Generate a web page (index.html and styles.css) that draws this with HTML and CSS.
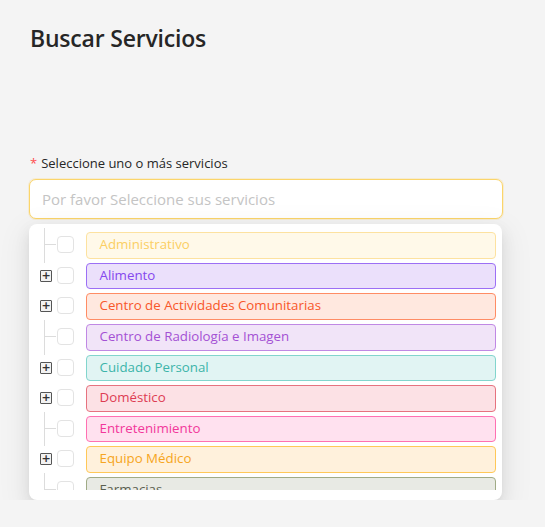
FILE: index.html
```html
<!DOCTYPE html>
<html lang="es">
<head>
<meta charset="utf-8">
<title>Buscar Servicios</title>
<link rel="stylesheet" href="styles.css">
</head>
<body>
<main class="page">
  <h1 class="title">Buscar Servicios</h1>
  <div class="field">
    <label class="label"><span class="req">*</span>Seleccione uno o más servicios</label>
    <div class="input">Por favor Seleccione sus servicios</div>
    <div class="dropdown">
      <ul class="tree">
        <li class="node"><span class="sw leaf"></span><span class="cb"></span><span class="tag t-admin">Administrativo</span></li>
        <li class="node"><span class="sw plus"></span><span class="cb"></span><span class="tag t-alim">Alimento</span></li>
        <li class="node"><span class="sw plus"></span><span class="cb"></span><span class="tag t-cac">Centro de Actividades Comunitarias</span></li>
        <li class="node"><span class="sw leaf"></span><span class="cb"></span><span class="tag t-rad">Centro de Radiología e Imagen</span></li>
        <li class="node"><span class="sw plus"></span><span class="cb"></span><span class="tag t-cui">Cuidado Personal</span></li>
        <li class="node"><span class="sw plus"></span><span class="cb"></span><span class="tag t-dom">Doméstico</span></li>
        <li class="node"><span class="sw leaf"></span><span class="cb"></span><span class="tag t-ent">Entretenimiento</span></li>
        <li class="node"><span class="sw plus"></span><span class="cb"></span><span class="tag t-equ">Equipo Médico</span></li>
        <li class="node"><span class="sw leaf"></span><span class="cb"></span><span class="tag t-far">Farmacias</span></li>
      </ul>
    </div>
  </div>
</main>
</body>
</html>
```

FILE: styles.css
```css
html, body {
  margin: 0;
  padding: 0;
  background: #f4f4f4;
  font-family: "Open Sans", "Noto Sans", sans-serif;
  color: #262626;
}
.page {
  padding: 22px 42px 0 29px;
}
.title {
  margin: 0 0 0 1px;
  font-size: 23px;
  font-weight: 600;
  line-height: 32px;
  color: #262626;
  letter-spacing: -0.2px;
}
.field {
  margin-top: 100px;
  width: 474px;
}
.label {
  display: block;
  font-size: 13px;
  line-height: 18px;
  color: #262626;
  padding-left: 1px;
  margin-bottom: 7px;
  margin-top: 1px;
}
.req {
  color: #ff4d4f;
  margin-right: 4px;
}
.input {
  box-sizing: border-box;
  height: 40px;
  border: 1px solid #fbd56a;
  border-radius: 7px;
  background: #fff;
  padding: 0 12px;
  font-size: 15px;
  line-height: 38px;
  color: #c4c4c4;
  box-shadow: 0 0 0 1px rgba(251, 213, 106, 0.25);
}
.dropdown {
  margin-top: 5px;
  width: 473px;
  box-sizing: border-box;
  background: #fff;
  border-radius: 8px;
  padding: 4px 6px 10px 10px;
  box-shadow: 0 6px 16px rgba(0,0,0,0.08), 0 3px 6px -4px rgba(0,0,0,0.12), 0 9px 28px 8px rgba(0,0,0,0.05);
}
.tree {
  list-style: none;
  margin: 0;
  padding: 0;
  height: 262px;
  overflow: hidden;
}
.node {
  display: flex;
  align-items: flex-start;
  height: 30.625px;
  padding-top: 4px;
  box-sizing: border-box;
}
.sw {
  position: relative;
  width: 18px;
  height: 26.625px;
  flex: none;
}
.sw.leaf::before {
  content: "";
  position: absolute;
  left: 5px;
  top: -4px;
  bottom: -4px;
  border-left: 1px solid #dcdcdc;
}
.sw.leaf::after {
  content: "";
  position: absolute;
  left: 5px;
  top: 12px;
  width: 12px;
  border-top: 1px solid #dcdcdc;
}
.sw.plus::before {
  content: "";
  position: absolute;
  left: 1px;
  top: 7px;
  width: 10px;
  height: 10px;
  border: 1px solid #555;
  border-radius: 1px;
  background: #f2f2f2;
}
.sw.plus::after {
  content: "+";
  position: absolute;
  left: 1px;
  top: 7px;
  width: 12px;
  height: 12px;
  font: 700 11px/12px "DejaVu Sans", sans-serif;
  text-align: center;
  color: #333;
}
.cb {
  box-sizing: border-box;
  width: 17px;
  height: 17px;
  flex: none;
  margin-top: 4px;
  border: 1px solid #e3e3e3;
  border-radius: 4px;
  background: #fff;
}
.tag {
  box-sizing: border-box;
  flex: 1;
  margin-left: 12px;
  height: 26.625px;
  border: 1.5px solid;
  border-radius: 4px;
  padding: 0 12.5px;
  font-size: 13.3px;
  line-height: 23.5px;
  white-space: nowrap;
}
.t-admin { background: #fff9e9; border-color: #fde2a0; color: #fbcf63; }
.t-alim  { background: #ebe0fb; border-color: #9c6ff5; color: #8548ee; }
.t-cac   { background: #ffe8df; border-color: #ff8c64; color: #f8572a; }
.t-rad   { background: #f1e4f8; border-color: #c088e4; color: #a451d4; }
.t-cui   { background: #e1f4f3; border-color: #82d5cd; color: #3cb4aa; }
.t-dom   { background: #fce1e5; border-color: #e6727f; color: #de3c53; }
.t-ent   { background: #ffe1ef; border-color: #ff70b2; color: #f2379b; }
.t-equ   { background: #fff1dc; border-color: #ffc858; color: #f6a521; }
.t-far   { background: #e8eae4; border-color: #a0ab86; color: #5a5f4f; }
```
